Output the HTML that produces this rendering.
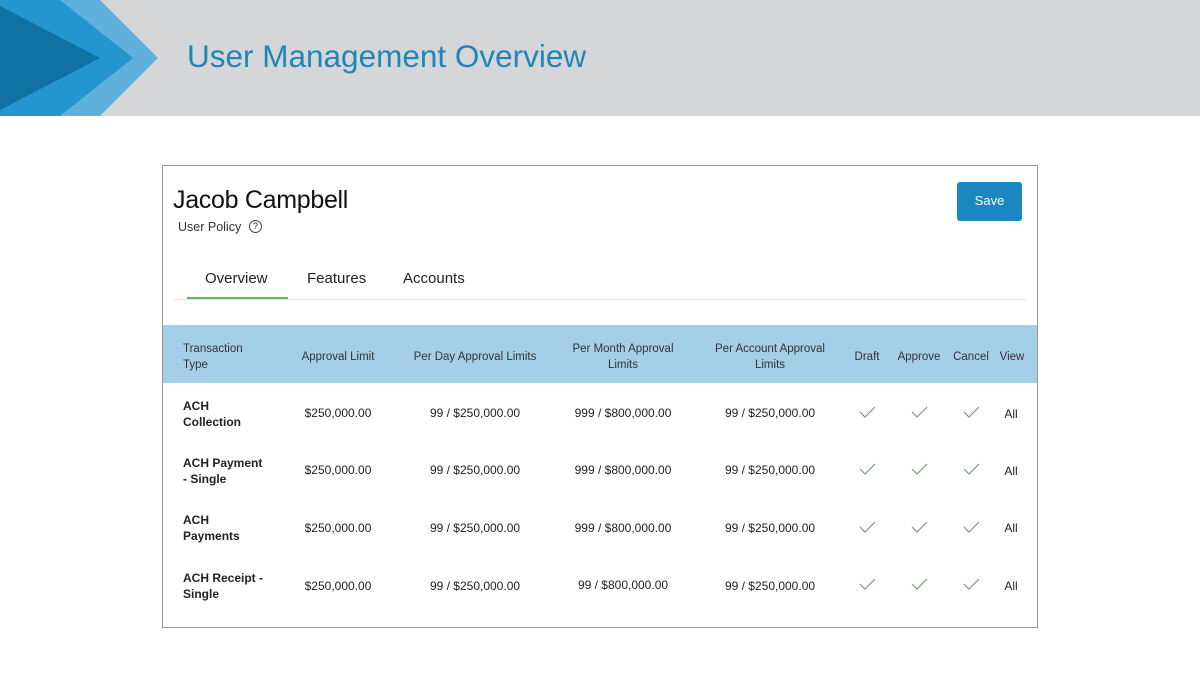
<!DOCTYPE html>
<html><head><style>
body{margin:0;width:1200px;height:674px;position:relative;background:#fff;font-family:"Liberation Sans",sans-serif;overflow:hidden;color:#222}
.a{position:absolute}
.c{position:absolute;transform:translateX(-50%);text-align:center;font-size:12px;white-space:nowrap}
.h{font-size:11.5px;color:#333;line-height:16px}
.b{font-weight:bold;font-size:12px;line-height:16px;left:183px}
</style></head><body>
<div class="a" style="left:0;top:0;width:1200px;height:116px;background:#d5d6d8"></div>
<svg class="a" style="left:0;top:0" width="170" height="116">
<polygon points="0,0 100,0 158,58 100,116 0,116" fill="#5fb1dd"/>
<polygon points="0,0 60,0 133,58 60,116 0,116" fill="#2396cf"/>
<polygon points="0,6 100,58 0,110" fill="#0f72a3"/>
</svg>
<div class="a" style="left:187px;top:38px;font-size:31.5px;color:#1f86ba">User Management Overview</div>
<div class="a" style="left:162px;top:165px;width:874px;height:461px;border:1px solid #9a9a9a"></div>
<div class="a" style="left:173px;top:186px;font-size:25px;color:#111;letter-spacing:-0.3px">Jacob Campbell</div>
<div class="a" style="left:178px;top:220px;font-size:12.5px;color:#333">User Policy</div>
<div class="a" style="left:249px;top:220px;width:11px;height:11px;border:1px solid #444;border-radius:50%;font-size:9px;text-align:center;line-height:11px">?</div>
<div class="a" style="left:957px;top:182px;width:65px;height:39px;background:#1a87c0;border-radius:3px;color:#fff;font-size:13px;text-align:center;line-height:38px">Save</div>
<div class="a" style="left:205px;top:270px;font-size:15px">Overview</div>
<div class="a" style="left:307px;top:270px;font-size:15px">Features</div>
<div class="a" style="left:403px;top:270px;font-size:15px">Accounts</div>
<div class="a" style="left:174px;top:299px;width:852px;height:1px;background:#e2e2e2"></div>
<div class="a" style="left:187px;top:297px;width:101px;height:2px;background:#5dbb5d"></div>
<div class="a" style="left:163px;top:325px;width:874px;height:58px;background:#a3d0e6"></div>
<div class="a h" style="left:183px;top:341px">Transaction<br>Type</div>
<div class="c h" style="left:338px;top:349px">Approval Limit</div>
<div class="c h" style="left:475px;top:349px">Per Day Approval Limits</div>
<div class="c h" style="left:623px;top:341px">Per Month Approval<br>Limits</div>
<div class="c h" style="left:770px;top:341px">Per Account Approval<br>Limits</div>
<div class="c h" style="left:867px;top:349px">Draft</div>
<div class="c h" style="left:919px;top:349px">Approve</div>
<div class="c h" style="left:971px;top:349px">Cancel</div>
<div class="c h" style="left:1012px;top:349px">View</div>

<div class="a b" style="top:398px">ACH<br>Collection</div>
<div class="a b" style="top:455px">ACH Payment<br>- Single</div>
<div class="a b" style="top:512px">ACH<br>Payments</div>
<div class="a b" style="top:570px">ACH Receipt -<br>Single</div>

<div class="c" style="left:338px;top:406px">$250,000.00</div>
<div class="c" style="left:475px;top:406px">99 / $250,000.00</div>
<div class="c" style="left:623px;top:406px">999 / $800,000.00</div>
<div class="c" style="left:770px;top:406px">99 / $250,000.00</div>
<div class="c" style="left:1011px;top:407px">All</div>

<div class="c" style="left:338px;top:463px">$250,000.00</div>
<div class="c" style="left:475px;top:463px">99 / $250,000.00</div>
<div class="c" style="left:623px;top:463px">999 / $800,000.00</div>
<div class="c" style="left:770px;top:463px">99 / $250,000.00</div>
<div class="c" style="left:1011px;top:464px">All</div>

<div class="c" style="left:338px;top:521px">$250,000.00</div>
<div class="c" style="left:475px;top:521px">99 / $250,000.00</div>
<div class="c" style="left:623px;top:521px">999 / $800,000.00</div>
<div class="c" style="left:770px;top:521px">99 / $250,000.00</div>
<div class="c" style="left:1011px;top:521px">All</div>

<div class="c" style="left:338px;top:579px">$250,000.00</div>
<div class="c" style="left:475px;top:579px">99 / $250,000.00</div>
<div class="c" style="left:623px;top:578px">99 / $800,000.00</div>
<div class="c" style="left:770px;top:579px">99 / $250,000.00</div>
<div class="c" style="left:1011px;top:579px">All</div>

<svg class="a" style="left:0;top:0" width="1200" height="674" fill="none" stroke="#7a9a7a" stroke-width="1.2">
<path d="M860 412l5 5 10-10M912 412l5 5 10-10M964 412l5 5 10-10"/>
<path transform="translate(0,57)" d="M860 412l5 5 10-10M912 412l5 5 10-10M964 412l5 5 10-10"/>
<path transform="translate(0,115)" d="M860 412l5 5 10-10M912 412l5 5 10-10M964 412l5 5 10-10"/>
<path transform="translate(0,172)" d="M860 412l5 5 10-10M912 412l5 5 10-10M964 412l5 5 10-10"/>
</svg>
</body></html>
